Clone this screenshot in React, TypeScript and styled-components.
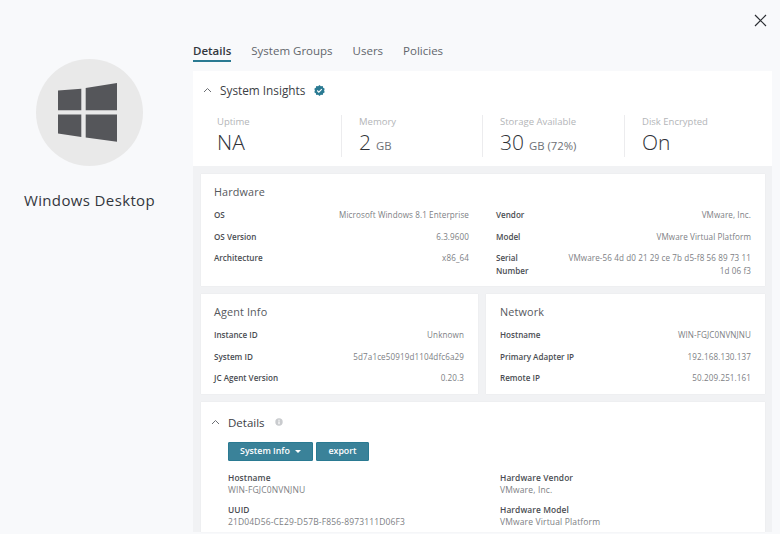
import React from "react";
import styled, { createGlobalStyle } from "styled-components";

const Global = createGlobalStyle`
  html, body { margin: 0; padding: 0; width: 780px; height: 534px; overflow: hidden; background: #f8f9fb; }
  body { font-family: "Open Sans", "Noto Sans", sans-serif; color: #3f4247; }
  * { box-sizing: border-box; }
`;
const Page = styled.div`
  width: 780px; height: 534px; overflow: hidden; background: #f8f9fb;
  display: grid; grid-template-columns: 193px 579px; position: relative;
`;
const Close = styled.button`
  position: absolute; top: 14px; left: 754px; width: 13px; height: 13px; padding: 0;
  background: none; border: 0; display: flex;
`;
const Side = styled.aside`
  display: flex; flex-direction: column; align-items: center; padding: 59px 14px 0 0;
`;
const Avatar = styled.div`
  width: 107px; height: 107px; border-radius: 50%; background: #e9e9e9;
  display: flex; align-items: center; justify-content: center; padding-right: 5px;
`;
const Name = styled.h1`
  margin: 24px 0 0; font-size: 15px; line-height: 20px; font-weight: 500; letter-spacing: .37px; color: #33373d; white-space: nowrap;
`;
const Main = styled.main`
  display: flex; flex-direction: column; padding-top: 43px; height: 532px;
`;
const Tabs = styled.nav`display: flex; gap: 20px; height: 28px;`;
const Tab = styled.div<{ $active?: boolean }>`
  height: 19px; font-size: 11.5px; line-height: 16px; font-weight: ${p => p.$active ? 600 : 500};
  color: ${p => p.$active ? "#33373d" : "#62666b"};
  border-bottom: ${p => p.$active ? "2px solid #2a7a92" : "0"};
`;
const Insights = styled.section`
  background: #fff; height: 95px; padding: 10px 0 0 10px; flex: none;
`;
const SectionHead = styled.div`display: flex; align-items: center; height: 18px; gap: 8px;`;
const InsightsTitle = styled.h2`margin: 0 1px 0 0; font-size: 11.8px; font-weight: 500; color: #3c4045;`;
const Stats = styled.div`display: flex; margin-top: 18px; margin-left: 14px;`;
const Stat = styled.div<{ $w: number }>`
  width: ${p => p.$w}px; height: 42px; margin-top: -2px;
  & + & { border-left: 1px solid #ececee; padding-left: 17px; }
`;
const StatLabel = styled.div`font-size: 9.5px; line-height: 13px; color: #b3b5b8;`;
const StatValue = styled.div`font-size: 21px; line-height: 27px; margin-top: 1px; font-weight: 300; color: #2f3237; white-space: nowrap;`;
const Unit = styled.span`font-size: 11.3px; color: #6d7075; margin-left: 5px; font-weight: 400;`;
const Well = styled.div`
  flex: 1; background: #f1f2f4; padding: 8px 7px 0 8px; display: flex; flex-direction: column; gap: 8px; min-height: 0;
`;
const Card = styled.section<{ $h?: number; $left?: number }>`
  background: #fff; box-shadow: 0 0 1px rgba(0,0,0,.08); padding: 10px 14px 0 ${p => p.$left ?? 13}px; flex: none;
  height: ${p => p.$h ? `${p.$h}px` : "auto"};
`;
const Row2 = styled.div`display: grid; grid-template-columns: 277px 279px; gap: 8px;`;
const CardTitle = styled.h3`margin: 0 0 9px; font-size: 10.8px; line-height: 16px; font-weight: 400; letter-spacing: .15px; color: #55585d;`;
const Grid2 = styled.div`display: grid; grid-template-columns: 255px 255px; column-gap: 27px;`;
const KV = styled.div<{ $tall?: boolean }>`
  display: flex; justify-content: space-between; gap: 8px; min-height: ${p => p.$tall ? 28 : 21.7}px; font-size: 8.1px; line-height: 12.5px;
`;
const Key = styled.div<{ $narrow?: boolean }>`
  font-weight: 600; color: #4a4d52; flex: none; max-width: ${p => p.$narrow ? "50px" : "none"};
`;
const Val = styled.div`color: #7d8084; text-align: right; letter-spacing: .1px;`;
const DetailsCard = styled(Card)`flex: 1; padding: 0; min-height: 0; overflow: hidden;`;
const DetailsHead = styled(SectionHead)`padding: 11px 0 0 10px; height: 29px; gap: 8px;`;
const DetailsTitle = styled.h3`margin: 0 2px 0 0; font-size: 11.5px; font-weight: 500; color: #3c4045;`;
const Actions = styled.div`display: flex; gap: 3px; margin: 11px 0 0 27px; height: 19px;`;
const Btn = styled.button<{ $w: number }>`
  width: ${p => p.$w}px; height: 19px; background: #3a8299; border: 1px solid #2a7a92; border-radius: 1px; color: #fff;
  font: 600 8.8px/1 "Open Sans", sans-serif; padding: 0; display: flex; align-items: center; justify-content: center; gap: 5px;
`;
const Caret = styled.span`width: 0; height: 0; border: 3px solid transparent; border-top: 3.5px solid #fff; border-bottom: 0;`;
const Fields = styled.div`display: grid; grid-template-columns: 272px 1fr; margin: 11px 0 0 27px; row-gap: 8px;`;
const FieldKey = styled.div`font-size: 8.4px; line-height: 12px; font-weight: 600; color: #4a4d52; letter-spacing: .1px;`;
const FieldVal = styled.div`font-size: 8.5px; line-height: 12px; color: #7d8084; letter-spacing: .15px;`;

const Chevron = () => (
  <svg width="9" height="6" viewBox="0 0 9 6" fill="none"><path d="M1 5l3.5-3.5L8 5" stroke="#6b6e73" strokeWidth="1" /></svg>
);
const WinIcon = () => (
  <svg width="59" height="59" viewBox="0 0 59 59" fill="#55565a">
    <path d="M0 7.4L23.3 5.7V27.2H0z" />
    <path d="M27.7 5L59 0V27.2H27.7z" />
    <path d="M0 31.4H23.3V54L0 50.6z" />
    <path d="M27.7 31.4H59V58.8L27.7 54.5z" />
  </svg>
);
const Badge = () => (
  <svg width="11" height="11" viewBox="0 0 24 24"><path fill="#2a7a92" d="M12 0l3 2.6 4-.4 1 3.8 3.4 2.2L22 12l1.4 3.8L20 18l-1 3.8-4-.4L12 24l-3-2.6-4 .4L4 18 .6 15.8 2 12 .6 8.2 4 6l1-3.8 4 .4z" /><path d="M7 12l3.5 3.5L17 9" stroke="#fff" strokeWidth="2.4" fill="none" /></svg>
);
const Info = () => (
  <svg width="8" height="8" viewBox="0 0 8 8"><circle cx="4" cy="4" r="3.7" fill="#c9cbce" /><rect x="3.4" y="3.4" width="1.2" height="2.8" fill="#fff" /><rect x="3.4" y="1.7" width="1.2" height="1.1" fill="#fff" /></svg>
);

const Pair = ({ k, v, tall }: { k: string; v: React.ReactNode; tall?: boolean }) => (
  <KV $tall={tall}><Key $narrow={tall}>{k}</Key><Val>{v}</Val></KV>
);

export default function App() {
  return (
    <Page>
      <Global />
      <Close aria-label="Close">
        <svg width="13" height="13" viewBox="0 0 13 13"><path d="M1 1l11 11M12 1L1 12" stroke="#2b2e33" strokeWidth="1.2" /></svg>
      </Close>
      <Side>
        <Avatar><WinIcon /></Avatar>
        <Name>Windows Desktop</Name>
      </Side>
      <Main>
        <Tabs>
          <Tab $active>Details</Tab>
          <Tab>System Groups</Tab>
          <Tab>Users</Tab>
          <Tab>Policies</Tab>
        </Tabs>
        <Insights>
          <SectionHead>
            <Chevron />
            <InsightsTitle>System Insights</InsightsTitle>
            <Badge />
          </SectionHead>
          <Stats>
            <Stat $w={124}><StatLabel>Uptime</StatLabel><StatValue>NA</StatValue></Stat>
            <Stat $w={141}><StatLabel>Memory</StatLabel><StatValue>2<Unit>GB</Unit></StatValue></Stat>
            <Stat $w={142}><StatLabel>Storage Available</StatLabel><StatValue>30<Unit>GB (72%)</Unit></StatValue></Stat>
            <Stat $w={130}><StatLabel>Disk Encrypted</StatLabel><StatValue>On</StatValue></Stat>
          </Stats>
        </Insights>
        <Well>
          <Card $h={112}>
            <CardTitle>Hardware</CardTitle>
            <Grid2>
              <Pair k="OS" v="Microsoft Windows 8.1 Enterprise" />
              <Pair k="Vendor" v="VMware, Inc." />
              <Pair k="OS Version" v="6.3.9600" />
              <Pair k="Model" v="VMware Virtual Platform" />
              <Pair k="Architecture" v="x86_64" />
              <Pair k="Serial Number" tall v={<>VMware-56 4d d0 21 29 ce 7b d5-f8 56 89 73 11<br />1d 06 f3</>} />
            </Grid2>
          </Card>
          <Row2>
            <Card $h={100}>
              <CardTitle>Agent Info</CardTitle>
              <Pair k="Instance ID" v="Unknown" />
              <Pair k="System ID" v="5d7a1ce50919d1104dfc6a29" />
              <Pair k="JC Agent Version" v="0.20.3" />
            </Card>
            <Card $h={100} $left={14}>
              <CardTitle>Network</CardTitle>
              <Pair k="Hostname" v="WIN-FGJC0NVNJNU" />
              <Pair k="Primary Adapter IP" v="192.168.130.137" />
              <Pair k="Remote IP" v="50.209.251.161" />
            </Card>
          </Row2>
          <DetailsCard>
            <DetailsHead>
              <Chevron />
              <DetailsTitle>Details</DetailsTitle>
              <Info />
            </DetailsHead>
            <Actions>
              <Btn $w={85}>System Info <Caret /></Btn>
              <Btn $w={53}>export</Btn>
            </Actions>
            <Fields>
              <div><FieldKey>Hostname</FieldKey><FieldVal>WIN-FGJC0NVNJNU</FieldVal></div>
              <div><FieldKey>Hardware Vendor</FieldKey><FieldVal>VMware, Inc.</FieldVal></div>
              <div><FieldKey>UUID</FieldKey><FieldVal>21D04D56-CE29-D57B-F856-8973111D06F3</FieldVal></div>
              <div><FieldKey>Hardware Model</FieldKey><FieldVal>VMware Virtual Platform</FieldVal></div>
            </Fields>
          </DetailsCard>
        </Well>
      </Main>
    </Page>
  );
}
